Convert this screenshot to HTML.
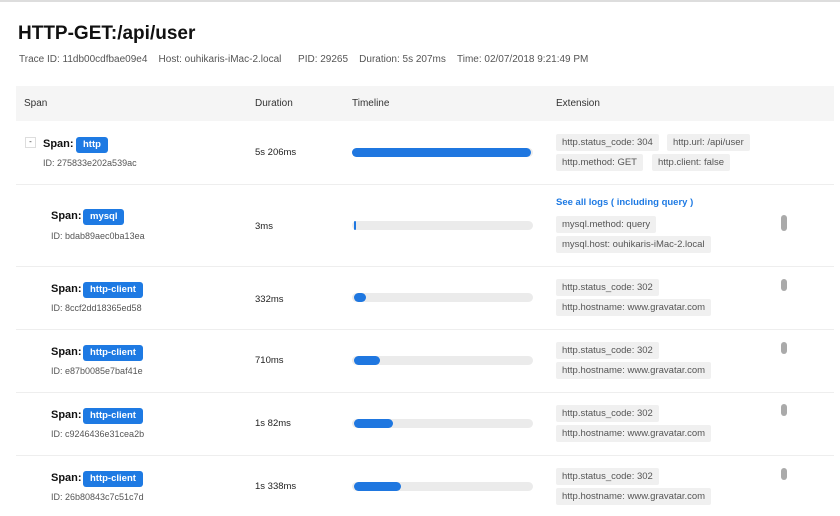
<!DOCTYPE html>
<html><head><meta charset="utf-8"><style>
*{margin:0;padding:0;box-sizing:border-box}
body{width:840px;height:516px;overflow:hidden;background:#fff;font-family:"Liberation Sans",Arial,sans-serif;color:#222;position:relative}
.a{position:absolute;white-space:nowrap}
.t{font-size:10px;color:#555}
.hd{font-size:10px;color:#333}
.sp{font-size:11px;font-weight:bold;color:#111}
.bd{position:absolute;background:#1e7ae3;color:#fff;font-size:9.5px;font-weight:bold;height:16px;line-height:16px;border-radius:3px;padding:0 7px}
.id{font-size:9px;color:#555}
.du{font-size:9.5px;color:#222}
.tr{position:absolute;left:352px;width:181px;height:9px;background:#ebebeb;border-radius:5px}
.br{position:absolute;left:354px;height:9px;background:#1f77e0;border-radius:5px}
.tg{position:absolute;background:#f0f0f0;color:#555;font-size:9.5px;height:17px;line-height:17px;padding:0 6px;border-radius:2px}
.ln{position:absolute;left:16px;width:818px;height:1px;background:#eee}
.hn{position:absolute;left:781px;width:6px;height:16px;background:#aaa;border-radius:3px}
</style></head><body>
<div style="position:absolute;left:0;top:0;width:840px;height:2px;background:#ddd"></div>
<div class="a" style="left:18px;top:23px;font-size:19px;font-weight:bold;color:#111">HTTP-GET:/api/user</div>
<div class="a t" style="left:19px;top:54px">Trace ID: 11db00cdfbae09e4&nbsp;&nbsp;&nbsp;&nbsp;Host: ouhikaris-iMac-2.local&nbsp;&nbsp;&nbsp;&nbsp;&nbsp;&nbsp;PID: 29265&nbsp;&nbsp;&nbsp;&nbsp;Duration: 5s 207ms&nbsp;&nbsp;&nbsp;&nbsp;Time: 02/07/2018 9:21:49 PM</div>
<div style="position:absolute;left:16px;top:86px;width:818px;height:35px;background:#f5f5f5"></div>
<div class="a hd" style="left:24px;top:98px">Span</div>
<div class="a hd" style="left:255px;top:98px">Duration</div>
<div class="a hd" style="left:352px;top:98px">Timeline</div>
<div class="a hd" style="left:556px;top:98px">Extension</div>

<div style="position:absolute;left:25px;top:137px;width:11px;height:11px;border:1px solid #ddd;font-size:8px;line-height:8px;text-align:center;color:#333">-</div>
<div class="a sp" style="left:43px;top:138px">Span:</div>
<div class="bd" style="left:76px;top:137px">http</div>
<div class="a id" style="left:43px;top:158px">ID: 275833e202a539ac</div>
<div class="a du" style="left:255px;top:147px">5s 206ms</div>
<div class="tr" style="top:148px"></div><div class="br" style="top:148px;left:352px;width:179px"></div>
<div class="tg" style="left:556px;top:134px">http.status_code: 304</div>
<div class="tg" style="left:667px;top:134px">http.url: /api/user</div>
<div class="tg" style="left:556px;top:154px">http.method: GET</div>
<div class="tg" style="left:652px;top:154px">http.client: false</div>
<div class="ln" style="top:184px"></div>

<div class="a sp" style="left:51px;top:210px">Span:</div>
<div class="bd" style="left:83px;top:209px">mysql</div>
<div class="a id" style="left:51px;top:231px">ID: bdab89aec0ba13ea</div>
<div class="a du" style="left:255px;top:221px">3ms</div>
<div class="tr" style="top:221px"></div><div class="br" style="top:221px;left:354px;width:2px"></div>
<div class="a" style="left:556px;top:197px;font-size:9.5px;font-weight:bold;color:#1e7ae3">See all logs ( including query )</div>
<div class="tg" style="left:556px;top:216px">mysql.method: query</div>
<div class="tg" style="left:556px;top:236px">mysql.host: ouhikaris-iMac-2.local</div>
<div class="hn" style="top:215px"></div>
<div class="ln" style="top:266px"></div>

<div class="a sp" style="left:51px;top:283px">Span:</div>
<div class="bd" style="left:83px;top:282px">http-client</div>
<div class="a id" style="left:51px;top:303px">ID: 8ccf2dd18365ed58</div>
<div class="a du" style="left:255px;top:294px">332ms</div>
<div class="tr" style="top:293px"></div><div class="br" style="top:293px;width:12px"></div>
<div class="tg" style="left:556px;top:279px">http.status_code: 302</div>
<div class="tg" style="left:556px;top:299px">http.hostname: www.gravatar.com</div>
<div class="hn" style="top:279px;height:12px"></div>
<div class="ln" style="top:329px"></div>

<div class="a sp" style="left:51px;top:346px">Span:</div>
<div class="bd" style="left:83px;top:345px">http-client</div>
<div class="a id" style="left:51px;top:366px">ID: e87b0085e7baf41e</div>
<div class="a du" style="left:255px;top:355px">710ms</div>
<div class="tr" style="top:356px"></div><div class="br" style="top:356px;width:26px"></div>
<div class="tg" style="left:556px;top:342px">http.status_code: 302</div>
<div class="tg" style="left:556px;top:362px">http.hostname: www.gravatar.com</div>
<div class="hn" style="top:342px;height:12px"></div>
<div class="ln" style="top:392px"></div>

<div class="a sp" style="left:51px;top:409px">Span:</div>
<div class="bd" style="left:83px;top:408px">http-client</div>
<div class="a id" style="left:51px;top:429px">ID: c9246436e31cea2b</div>
<div class="a du" style="left:255px;top:418px">1s 82ms</div>
<div class="tr" style="top:419px"></div><div class="br" style="top:419px;width:39px"></div>
<div class="tg" style="left:556px;top:405px">http.status_code: 302</div>
<div class="tg" style="left:556px;top:425px">http.hostname: www.gravatar.com</div>
<div class="hn" style="top:404px;height:12px"></div>
<div class="ln" style="top:455px"></div>

<div class="a sp" style="left:51px;top:472px">Span:</div>
<div class="bd" style="left:83px;top:471px">http-client</div>
<div class="a id" style="left:51px;top:492px">ID: 26b80843c7c51c7d</div>
<div class="a du" style="left:255px;top:481px">1s 338ms</div>
<div class="tr" style="top:482px"></div><div class="br" style="top:482px;width:47px"></div>
<div class="tg" style="left:556px;top:468px">http.status_code: 302</div>
<div class="tg" style="left:556px;top:488px">http.hostname: www.gravatar.com</div>
<div class="hn" style="top:468px;height:12px"></div>
</body></html>
